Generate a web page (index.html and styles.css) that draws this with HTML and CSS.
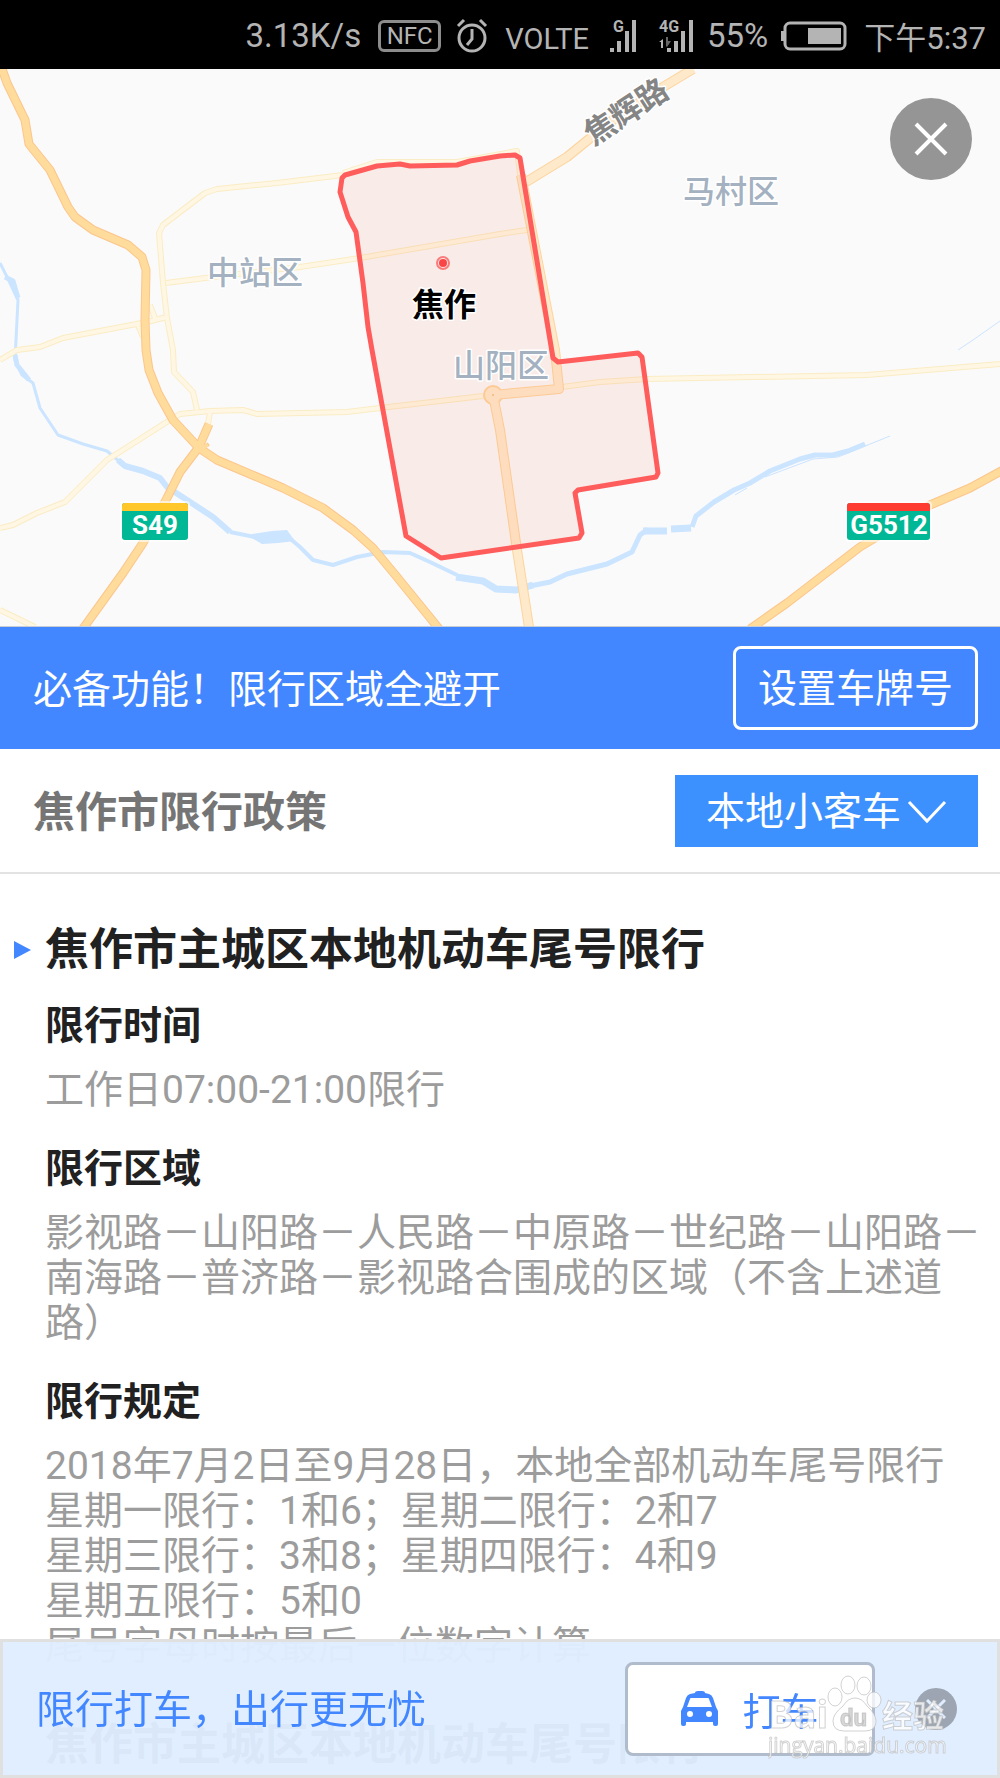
FILE: index.html
```html
<!DOCTYPE html>
<html lang="zh-CN">
<head>
    <meta charset="UTF-8">
    <meta name="viewport" content="width=device-width, initial-scale=1.0">
    <title>焦作市限行政策</title>
    <link rel="stylesheet" href="styles.css">
</head>
<body>
    <header class="status-bar">
        <span class="speed">3.13K/s</span>
        <span class="nfc">NFC</span>
        <svg class="alarm" width="32" height="36" viewBox="0 0 32 36" fill="none" stroke="#b4b4b4" stroke-width="3">
            <circle cx="16" cy="20" r="13"/>
            <path d="M16 11v10l-5 6M2 8l6-6M30 8l-6-6"/>
        </svg>
        <span class="volte">VOLTE</span>
        <svg class="signal" width="28" height="34" viewBox="0 0 28 34" fill="#b4b4b4">
            <text x="4" y="13" class="signal-label">G</text>
            <path d="M1 29h4v4H1zM8 22h4v11H8zM16 12h4v21h-4zM23 1h4v32h-4z"/>
        </svg>
        <svg class="signal-4g" width="34" height="34" viewBox="0 0 34 34" fill="#b4b4b4">
            <text x="0" y="13" class="signal-label">4G</text>
            <path d="M8 29h4v4H8zM15 22h4v11h-4zM22 12h4v21h-4zM30 1h4v32h-4zM4 20v9H2v-6H0z"/>
            <path d="M7 18h2v4h3l-4 6-1-1z" fill="#666"/>
        </svg>
        <span>55%</span>
        <svg class="battery" width="66" height="30" viewBox="0 0 66 30">
            <rect x="4" y="2" width="60" height="26" rx="5" fill="none" stroke="#b4b4b4" stroke-width="3"/>
            <path d="M0 10h3v10H0zM27 7h33v16H27z" fill="#b4b4b4"/>
        </svg>
        <span class="time">下午5:37</span>
    </header>

    <section class="map">
        <svg class="map-canvas" viewBox="0 69 1000 557">
            <!-- rivers -->
            <g class="river">
                <path d="M0 263L10 283 18 300 15 360 22 375 33 383 40 408 58 435 83 444 107 451 120 462" stroke-width="3"/>
                <path d="M5 277l8 4 5 17M15 355l2 10 12 15" stroke-width="5"/>
                <path d="M118 460l7 6 18 5 17 7 7 9 20 13 26 17 17 15" stroke-width="6"/>
                <path d="M230 532l30 6 27-2 13 11 13 13 20 5 24-8 26-5 27 1 20 9 27 13" stroke-width="4"/>
                <path d="M250 537l12 7 16-1 17-2-8-11-15 1-20 3z" fill="#cbe4ff" stroke="none"/>
                <path d="M456 577l27 4 13 8 20 1 17-5" stroke-width="7"/>
                <path d="M530 586l20-4 17-8 20-5 20-5 25-12 8-17 8-6" stroke-width="5"/>
                <path d="M643 531h24M671 529l20-1" stroke-width="7"/>
                <path d="M692 527l4-11 18-14 20-12 16-7 20-12 30-12 15-4h18l15-4 17-7" stroke-width="5"/>
                <path d="M735 495l12-7M765 477l48-18 25-2 52-21M958 350l15-10 27-19" stroke-width="1"/>
            </g>
            <!-- local roads, casing then fill -->
            <g class="road-minor-casing">
                <path id="m1" d="M343 175L277 183 217 189 205 193 163 225 159 233 163 283 167 318 173 350 174 372 193 392 197 410"/>
                <path id="m2" d="M166 283L213 277 300 267 360 258 500 234 527 230"/>
                <path id="m3" d="M167 317L147 322 63 338 40 347 17 350 0 360M150 305l5 13M138 325l5 12"/>
                <path id="m4" d="M0 528L13 525 37 513 65 502 107 460 170 420 180 414 210 411 243 410 257 414 347 412 380 408 483 396"/>
                <path id="m5" d="M562 387L600 382 647 379 867 375 1000 364M210 412l-2 12M0 610l35 17M343 173l34-11 80 0 60-11 4 30"/>
            </g>
            <g class="road-minor">
                <use href="#m1"/><use href="#m2"/><use href="#m3"/><use href="#m4"/><use href="#m5"/>
            </g>
            <!-- main roads -->
            <g class="road-main-casing">
                <path id="r1" d="M693 69L663 87 610 122 567 157 526 182"/>
                <path id="r2" d="M521 175L555 350 559 389 493 395 500 430 517 550 529 627"/>
                <circle cx="493" cy="395" r="5"/>
            </g>
            <g class="road-main">
                <use href="#r1"/><use href="#r2"/>
                <circle cx="493" cy="395" r="4"/>
            </g>
            <circle cx="493" cy="395" r="1" fill="#f7bf7d"/>
            <!-- highways -->
            <g class="highway-casing">
                <path id="h1" d="M1 66L7 83 25 120 29 144 50 170 68 207 75 217 93 230 128 245 142 257 146 270 145 320 146 350 149 370 158 393 173 420 199 448 217 460 283 488 323 508 353 530 373 548 397 577 440 630"/>
                <path id="h2" d="M209 424L199 447 180 472 167 498 143 543 123 573 82 630M204 445l2 3"/>
                <path id="h3" d="M1003 470L970 488 930 505 860 547 787 603 750 629"/>
            </g>
            <g class="highway">
                <use href="#h1"/><use href="#h2"/><use href="#h3"/>
            </g>
            <!-- restricted area -->
            <path class="zone" d="M515 155L500 156 470 161 457 165 410 166 400 164 377 166 345 175 342 178 340 192 348 217 356 232 363 283 368 327 372 350 406 536 441 558 579 538 582 533 575 493 578 490 656 477 658 473 642 357 638 353 558 362 553 358 520 158Z"/>
            <circle cx="443" cy="263" r="6" fill="#fde3e3" stroke="#f87c7c" stroke-width="2"/>
            <circle cx="443" cy="263" r="4" fill="#f94545"/>
            <!-- labels -->
            <text class="district" x="207" y="284">中站区</text>
            <text class="district" x="683" y="203">马村区</text>
            <text class="district" x="453" y="377">山阳区</text>
            <text class="city" x="412" y="316">焦作</text>
            <text class="road-name" transform="translate(632 121) rotate(-33)">焦辉路</text>
            <rect x="120" y="501" width="70" height="41" rx="4" fill="#fff" opacity=".6"/>
            <rect x="122" y="503" width="66" height="37" rx="3" fill="#00b896"/>
            <path d="M122 511v-5q0-3 3-3h60q3 0 3 3v5z" fill="#ffc72a"/>
            <text class="shield" x="155" y="534">S49</text>
            <rect x="845" y="501" width="87" height="41" rx="4" fill="#fff" opacity=".6"/>
            <rect x="847" y="503" width="83" height="37" rx="3" fill="#00b896"/>
            <path d="M847 511v-5q0-3 3-3h77q3 0 3 3v5z" fill="#ff3c32"/>
            <text class="shield" x="889" y="534">G5512</text>
        </svg>
        <button class="close-btn" type="button" aria-label="关闭">
            <svg width="34" height="34" viewBox="0 0 34 34"><path d="M2 2l30 30M32 2L2 32" stroke="#fff" stroke-width="4"/></svg>
        </button>
    </section>

    <section class="banner">
        <p>必备功能！限行区域全避开</p>
        <button class="plate-btn" type="button">设置车牌号</button>
    </section>

    <section class="policy-head">
        <h1><label for="carType">焦作市限行政策</label></h1>
        <div class="select-wrap">
            <select id="carType">
                <option>本地小客车</option>
            </select>
            <svg class="chevron" width="40" height="24" viewBox="0 0 40 24" fill="none"><path d="M2 2l18 19L38 2" stroke="#fff" stroke-width="3"/></svg>
        </div>
    </section>

    <main class="policy">
        <h2>焦作市主城区本地机动车尾号限行</h2>
        <h3>限行时间</h3>
        <p>工作日07:00-21:00限行</p>
        <h3>限行区域</h3>
        <p>影视路－山阳路－人民路－中原路－世纪路－山阳路－南海路－普济路－影视路合围成的区域（不含上述道路）</p>
        <h3>限行规定</h3>
        <p>2018年7月2日至9月28日，本地全部机动车尾号限行<br>
            星期一限行：1和6；星期二限行：2和7<br>
            星期三限行：3和8；星期四限行：4和9<br>
            星期五限行：5和0<br>
            尾号字母时按最后一位数字计算</p>
        <h2 class="next">焦作市主城区本地机动车尾号限行</h2>
    </main>

    <footer class="taxi-bar">
        <p>限行打车，出行更无忧</p>
        <button class="taxi-btn" type="button">
            <svg width="37" height="36" viewBox="0 0 37 36">
                <path fill="#4287ff" fill-rule="evenodd" d="M14 2q0-2 3-2h4q3 0 3 2l4 1q3 1 4 4l3 9 2 4v13q0 2-2 2h-1q-2 0-2-2v-2H5v2q0 2-2 2H2q-2 0-2-2V20l2-4 3-9q1-3 4-4zM10 7q-1 0-1 1l-3 8h25l-3-8q0-1-1-1zM9 20a3 3 0 1 0 0 6 3 3 0 0 0 0-6zM28 20a3 3 0 1 0 0 6 3 3 0 0 0 0-6z"/>
            </svg>
            打车
        </button>
        <button class="dismiss-btn" type="button" aria-label="关闭">
            <svg width="20" height="20" viewBox="0 0 20 20"><path d="M1 1l18 18M19 1L1 19" stroke="#e0edff" stroke-width="3"/></svg>
        </button>
        <svg class="watermark" width="190" height="90" viewBox="0 0 190 90">
            <text class="wm-brand" x="0" y="55">Bai</text>
            <ellipse cx="67" cy="24" rx="7" ry="9"/>
            <ellipse cx="80" cy="12" rx="7" ry="9"/>
            <ellipse cx="96" cy="13" rx="7" ry="9"/>
            <ellipse cx="106" cy="27" rx="7" ry="8"/>
            <path d="M87 25q7 0 12 8 9 8 9 15 0 10-11 10H76q-11 0-11-10 0-7 10-15 5-8 12-8z"/>
            <text class="wm-du" x="72" y="53">du</text>
            <text class="wm-cn" x="114" y="54">经验</text>
            <text class="wm-url" x="0" y="80">jingyan.baidu.com</text>
        </svg>
    </footer>
</body>
</html>
```

FILE: styles.css
```css
*, *::before {
    box-sizing: border-box;
}
body {
    margin: 0;
    min-height: 100vh;
    background-color: #fff;
    font-family: Roboto, "Noto Sans CJK SC", sans-serif;
    font-size: 39px;
    color: #9c9c9c;
}
h1, h2, h3, p {
    margin: 0;
}
button, select {
    font-family: inherit;
    cursor: pointer;
}
svg {
    display: block;
    flex: none;
}

/* Status bar */
.status-bar {
    display: flex;
    align-items: center;
    justify-content: flex-end;
    height: 69px;
    padding: 2px 14px 0 0;
    background-color: #000;
    color: #b4b4b4;
    font-size: 33px;
    white-space: nowrap;
}
.nfc {
    width: 63px;
    margin: 0 15px 0 17px;
    border: 3px solid #8c8c8c;
    border-radius: 6px;
    font-size: 24px;
    line-height: 26px;
    text-align: center;
}
.volte {
    margin: 6px 20px 0 17px;
    font-size: 29px;
}
.signal {
    margin-right: 22px;
}
.signal-4g {
    margin-right: 14px;
}
.signal-label {
    font-size: 16px;
    font-weight: bold;
}
.battery {
    margin: 0 17px 0 13px;
}
.time {
    font-size: 31px;
}

/* Map */
.map {
    position: relative;
    background-color: #fafafa;
    border-bottom: 1px solid #c8ccd4;
}
.map-canvas {
    width: 100%;
    height: auto;
}
.river {
    fill: none;
    stroke: #cbe4ff;
    stroke-linejoin: round;
}
.road-minor-casing, .road-minor, .road-main-casing, .road-main, .highway-casing, .highway {
    fill: none;
    stroke-linejoin: round;
}
.road-minor-casing {
    stroke: #faecc4;
    stroke-width: 6px;
}
.road-minor {
    stroke: #fff7e3;
    stroke-width: 4px;
}
.road-main-casing {
    stroke: #fdd49c;
    stroke-width: 10px;
}
.road-main {
    stroke: #ffe9cb;
    stroke-width: 8px;
}
.highway-casing {
    stroke: #fbc68c;
    stroke-width: 9px;
}
.highway {
    stroke: #ffdb9c;
    stroke-width: 7px;
}
.zone {
    fill: rgba(245, 130, 100, 0.12);
    stroke: #ff5c5c;
    stroke-width: 5px;
    stroke-linejoin: round;
}
.district, .city, .road-name {
    paint-order: stroke;
    stroke: #fff;
    stroke-width: 3px;
    stroke-linejoin: round;
    font-size: 32px;
    font-weight: 500;
}
.district {
    fill: #a3b1c0;
}
.city {
    fill: #000;
    font-weight: bold;
}
.road-name {
    fill: #858585;
    font-size: 31px;
    font-weight: bold;
    text-anchor: middle;
}
.shield {
    fill: #fff;
    font-size: 26px;
    font-weight: bold;
    text-anchor: middle;
}
.close-btn {
    position: absolute;
    top: 29px;
    right: 28px;
    display: flex;
    align-items: center;
    justify-content: center;
    width: 82px;
    height: 82px;
    padding: 0;
    border: none;
    border-radius: 50%;
    background-color: #959595;
}

/* Plate number banner */
.banner {
    display: flex;
    align-items: center;
    justify-content: space-between;
    height: 122px;
    padding: 0 22px 0 33px;
    background-color: #4287ff;
    color: #fff;
}
.banner p, .policy-head h1, .taxi-bar p {
    padding-bottom: 5px;
}
.plate-btn {
    width: 245px;
    height: 84px;
    padding: 0 0 6px;
    border: 3px solid #fff;
    border-radius: 8px;
    background-color: transparent;
    color: #fff;
    font-size: 39px;
}

/* Policy heading */
.policy-head {
    display: flex;
    align-items: center;
    justify-content: space-between;
    height: 125px;
    padding: 0 22px 0 33px;
    border-bottom: 2px solid #e3e3e3;
}
.policy-head h1 {
    color: #757575;
    font-size: 42px;
    font-weight: bold;
}
.select-wrap {
    position: relative;
}
.select-wrap select {
    display: block;
    width: 303px;
    height: 72px;
    padding: 2px 70px 0 31px;
    border: none;
    border-radius: 0;
    appearance: none;
    background-color: #3c91ff;
    color: #fff;
    font-size: 39px;
}
.chevron {
    position: absolute;
    top: 25px;
    right: 31px;
    pointer-events: none;
}

/* Policy text */
.policy {
    padding: 46px 15px 0 45px;
}
.policy h2 {
    display: flex;
    align-items: center;
    margin: 0 0 23px -31px;
    color: #212121;
    font-size: 44px;
    line-height: 60px;
}
.policy h2::before {
    content: "";
    width: 17px;
    margin-right: 14px;
    border-top: 9px solid transparent;
    border-bottom: 9px solid transparent;
    border-left: 17px solid #4287ff;
}
.policy h3 {
    color: #212121;
    font-size: 39px;
    line-height: 46px;
}
.policy p {
    margin: 19px 0 33px;
    line-height: 45px;
}
.policy .next {
    margin: 46px 0 0;
}
.policy .next::before {
    display: none;
}

/* Taxi bar */
.taxi-bar {
    position: fixed;
    left: 0;
    right: 0;
    bottom: 0;
    display: flex;
    align-items: center;
    height: 139px;
    padding: 0 40px 0 33px;
    border: 3px solid #e0e0e0;
    background-color: rgba(224, 237, 255, 0.97);
    color: #4287ff;
}
.taxi-btn {
    display: flex;
    align-items: center;
    justify-content: center;
    gap: 24px;
    width: 250px;
    height: 94px;
    margin: 0 40px 0 auto;
    border: 3px solid #b0bccb;
    border-radius: 8px;
    background-color: #fff;
    color: #4287ff;
    font-size: 38px;
}
.dismiss-btn {
    display: flex;
    align-items: center;
    justify-content: center;
    width: 42px;
    height: 42px;
    padding: 0;
    border: none;
    border-radius: 50%;
    background-color: #9ca5b1;
}
.watermark {
    position: absolute;
    right: 39px;
    bottom: 12px;
    fill: rgba(255, 255, 255, 0.75);
    stroke: rgba(180, 180, 180, 0.6);
    stroke-width: 1px;
    pointer-events: none;
}
.wm-brand {
    font-family: "Open Sans", sans-serif;
    font-size: 38px;
    font-weight: bold;
}
.wm-du {
    fill: rgba(205, 205, 205, 0.8);
    font-size: 24px;
    font-weight: bold;
}
.wm-cn {
    font-size: 31px;
    font-weight: bold;
}
.wm-url {
    font-family: "Open Sans", sans-serif;
    font-size: 21px;
}
```
